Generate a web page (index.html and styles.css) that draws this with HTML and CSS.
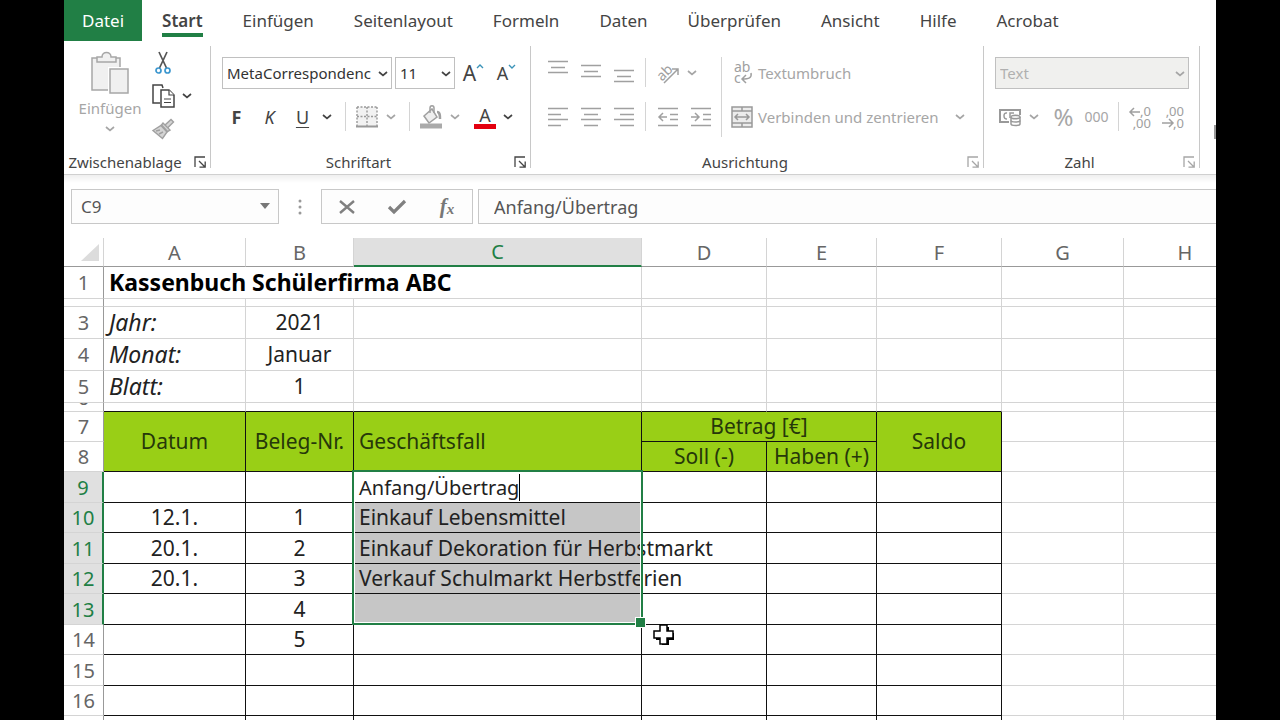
FILE: index.html
```html
<!DOCTYPE html>
<html lang="de">
<head>
  <meta charset="UTF-8">
  <meta name="viewport" content="width=device-width, initial-scale=1.0">
  <title>Kassenbuch Schülerfirma ABC</title>
  <link rel="stylesheet" href="styles.css">
</head>
<body>
  <svg class="defs" aria-hidden="true">
    <symbol id="chevron" viewBox="0 0 10 6"><path d="M1 1l4 3.4L9 1" fill="none" stroke="currentColor" stroke-width="1.7"/></symbol>
    <symbol id="launcher" viewBox="0 0 12 12"><path d="M1 11V1h10M5 5l6 6M11.2 5.500v5.700H5.500" fill="none" stroke="currentColor" stroke-width="1.3"/></symbol>
  </svg>

  <div class="app">
    <nav class="tabs">
      <button class="tab file">Datei</button>
      <button class="tab active"><span>Start</span></button>
      <button class="tab">Einfügen</button>
      <button class="tab">Seitenlayout</button>
      <button class="tab">Formeln</button>
      <button class="tab">Daten</button>
      <button class="tab">Überprüfen</button>
      <button class="tab">Ansicht</button>
      <button class="tab">Hilfe</button>
      <button class="tab">Acrobat</button>
    </nav>

    <div class="ribbon">
      <section class="group clipboard">
        <div class="tools">
          <button class="paste" disabled>
            <svg width="40" height="44" viewBox="0 0 40 44" fill="#f0f0f0" stroke="#a6a6a6" stroke-width="1.500">
              <path d="M2 7h28v32H2z"/>
              <path d="M7 11V6h5c0-6 9-6 9 0h5v5z"/>
              <path d="M20 18h18v24H20z" stroke="#fff" stroke-width="4"/>
              <path d="M20 18h18v24H20z"/>
            </svg>
            <span>Einfügen</span>
            <svg class="chev"><use href="#chevron"/></svg>
          </button>
          <div class="stack">
            <button class="icon" aria-label="Ausschneiden">
              <svg width="18" height="24" viewBox="0 0 18 24" fill="none" stroke="#555" stroke-width="1.700">
                <path d="M5 1l7.500 16M13 1L5.500 17"/>
                <circle cx="4.500" cy="19.500" r="2.500" stroke="#3c97cf"/>
                <circle cx="13.500" cy="19.500" r="2.500" stroke="#3c97cf"/>
              </svg>
            </button>
            <div class="row">
              <button class="icon" aria-label="Kopieren">
                <svg width="24" height="24" viewBox="0 0 24 24" fill="#fff" stroke="#444" stroke-width="1.500">
                  <path d="M9 19H2V1h9l1 3"/>
                  <path d="M10 6h8l5 5v12H10z"/>
                  <path d="M18 6v5h5M13 15h7M13 18.500h7" stroke-width="1.200"/>
                </svg>
              </button>
              <button class="drop" aria-label="Kopieroptionen"><svg class="chev"><use href="#chevron"/></svg></button>
            </div>
            <button class="icon" aria-label="Format übertragen" disabled>
              <svg width="24" height="22" viewBox="0 0 24 22" fill="#d4d4d4" stroke="#a0a0a0" stroke-width="1.400">
                <path d="M14 7l6-5.500 2.500 2.500-6 6"/>
                <path d="M12 5l7 7-2.500 1.500L10.500 7z"/>
                <path d="M10 7.500l6 6.500-4.500 6.500L2 12.500z"/>
                <path d="M5 13l4-1M8 16l4-2" fill="none"/>
              </svg>
            </button>
          </div>
        </div>
        <footer><span>Zwischenablage</span><button class="launch" aria-label="Zwischenablage öffnen"><svg><use href="#launcher"/></svg></button></footer>
      </section>

      <section class="group font">
        <div class="tools rows">
          <div class="row">
            <label class="pick family"><select aria-label="Schriftart"><option>MetaCorrespondence</option></select><svg class="chev"><use href="#chevron"/></svg></label>
            <label class="pick size"><select aria-label="Schriftgrad"><option>11</option></select><svg class="chev"><use href="#chevron"/></svg></label>
            <button class="icon letter big" aria-label="Schrift vergrößern">A<svg width="8" height="5" viewBox="0 0 8 5"><path d="M1 4l3-3 3 3" fill="none" stroke="#3b93b8" stroke-width="1.400"/></svg></button>
            <button class="icon letter" aria-label="Schrift verkleinern">A<svg width="8" height="5" viewBox="0 0 8 5"><path d="M1 1l3 3 3-3" fill="none" stroke="#3b93b8" stroke-width="1.400"/></svg></button>
          </div>
          <div class="row">
            <button class="icon bold">F</button>
            <button class="icon italic">K</button>
            <button class="icon underline">U</button>
            <button class="drop" aria-label="Unterstreichen"><svg class="chev"><use href="#chevron"/></svg></button>
            <i class="sep"></i>
            <button class="icon" aria-label="Rahmen" disabled>
              <svg width="22" height="22" viewBox="0 0 22 22" fill="none" stroke="#999" stroke-width="1.400">
                <path d="M1 1h20v19H1z" fill="#f2f2f2" stroke="none"/>
                <path d="M1 1h20M1 1v19M21 1v19M11 1v19M1 10.500h20" stroke-dasharray="2 1.500"/>
                <path d="M0 20.500h22" stroke-width="2"/>
              </svg>
            </button>
            <button class="drop" aria-label="Rahmenlinien" disabled><svg class="chev"><use href="#chevron"/></svg></button>
            <i class="sep"></i>
            <button class="icon" aria-label="Füllfarbe" disabled>
              <svg width="24" height="24" viewBox="0 0 24 24" fill="none" stroke="#a0a0a0" stroke-width="1.500">
                <path d="M5 11l8-7 5 8-8 6z" fill="#eee"/>
                <path d="M11 8V3c0-3 4-3 4 0v5"/>
                <path d="M18 7c3 0 3 3 3 7" stroke-width="2.500"/>
                <path d="M1 21h22" stroke="#aaa" stroke-width="5"/>
              </svg>
            </button>
            <button class="drop" aria-label="Füllfarben" disabled><svg class="chev"><use href="#chevron"/></svg></button>
            <button class="icon color">A</button>
            <button class="drop" aria-label="Schriftfarben"><svg class="chev"><use href="#chevron"/></svg></button>
          </div>
        </div>
        <footer><span>Schriftart</span><button class="launch" aria-label="Schriftart öffnen"><svg><use href="#launcher"/></svg></button></footer>
      </section>

      <section class="group align">
        <div class="tools">
          <div class="rows">
            <div class="row">
              <button class="icon" aria-label="Oben ausrichten" disabled><svg width="20" height="28" viewBox="0 0 20 28"><path d="M0 2.500h20M3 8.500h14M0 13.500h20" class="line"/></svg></button>
              <button class="icon" aria-label="Zentriert ausrichten" disabled><svg width="20" height="28" viewBox="0 0 20 28"><path d="M0 6.500h20M3 12.500h14M0 17.500h20" class="line"/></svg></button>
              <button class="icon" aria-label="Unten ausrichten" disabled><svg width="20" height="28" viewBox="0 0 20 28"><path d="M0 11.500h20M3 17.500h14M0 22.500h20" class="line"/></svg></button>
              <i class="sep"></i>
              <button class="icon" aria-label="Ausrichtung" disabled>
                <svg width="24" height="24" viewBox="0 0 24 24"><text x="1" y="17" transform="rotate(-45 8 13)" class="ab">ab</text><path d="M8 22L22 8M16 8h6v6" class="line"/></svg>
              </button>
              <button class="drop" aria-label="Ausrichtungswinkel" disabled><svg class="chev"><use href="#chevron"/></svg></button>
            </div>
            <div class="row">
              <button class="icon" aria-label="Linksbündig" disabled><svg width="20" height="20" viewBox="0 0 20 20"><path d="M0 1.500h20M0 7.500h13M0 12.500h20M0 18.500h13" class="line"/></svg></button>
              <button class="icon" aria-label="Zentriert" disabled><svg width="20" height="20" viewBox="0 0 20 20"><path d="M0 1.500h20M3 7.500h14M0 12.500h20M3 18.500h14" class="line"/></svg></button>
              <button class="icon" aria-label="Rechtsbündig" disabled><svg width="20" height="20" viewBox="0 0 20 20"><path d="M0 1.500h20M6 7.500h14M0 12.500h20M6 18.500h14" class="line"/></svg></button>
              <i class="sep"></i>
              <button class="icon" aria-label="Einzug verkleinern" disabled><svg width="20" height="20" viewBox="0 0 20 20"><path d="M0 1.500h20M12 7.500h8M12 12.500h8M0 18.500h20M9 10H1M5 6l-4 4 4 4" class="line"/></svg></button>
              <button class="icon" aria-label="Einzug vergrößern" disabled><svg width="20" height="20" viewBox="0 0 20 20"><path d="M0 1.500h20M12 7.500h8M12 12.500h8M0 18.500h20M0 10h8M4 6l4 4-4 4" class="line"/></svg></button>
            </div>
          </div>
          <i class="sep tall"></i>
          <div class="rows">
            <div class="row">
              <button class="wide" disabled>
                <svg width="22" height="24" viewBox="0 0 22 24"><text x="3" y="11" class="ab">ab</text><text x="3" y="22" class="ab">c</text><path d="M20 12c1 5-2 6-9 6M15 14l-4 4 4 4" class="line"/></svg>
                Textumbruch
              </button>
            </div>
            <div class="row">
              <button class="wide" disabled>
                <svg width="22" height="22" viewBox="0 0 22 22" fill="#ececec" stroke="#999" stroke-width="1.500"><path d="M1 1h20v20H1z"/><path d="M1 5h20M1 17h20M11 1v4M11 17v4M4 11h14M7 8l-3 3 3 3M15 8l3 3-3 3" fill="none"/></svg>
                Verbinden und zentrieren
              </button>
              <button class="drop" aria-label="Verbindungsoptionen" disabled><svg class="chev"><use href="#chevron"/></svg></button>
            </div>
          </div>
        </div>
        <footer><span>Ausrichtung</span><button class="launch" aria-label="Ausrichtung öffnen" disabled><svg><use href="#launcher"/></svg></button></footer>
      </section>

      <section class="group number">
        <div class="tools rows">
          <div class="row">
            <label class="pick format"><select aria-label="Zahlenformat" disabled><option>Text</option></select><svg class="chev"><use href="#chevron"/></svg></label>
          </div>
          <div class="row">
            <button class="icon" aria-label="Buchhaltungsformat" disabled>
              <svg width="24" height="20" viewBox="0 0 24 20" fill="none" stroke="#999" stroke-width="1.500">
                <path d="M11 15H2V3h20v5" stroke-width="2"/>
                <path d="M9 6c-4-1-4 6 0 6M12 11V6h4"/>
                <path d="M13 10v7c0 2 9 2 9 0v-7" fill="#fff"/>
                <ellipse cx="17.500" cy="10" rx="4.500" ry="1.800" fill="#eee"/>
                <path d="M13 13.500c0 2 9 2 9 0"/>
              </svg>
            </button>
            <button class="drop" aria-label="Währungen" disabled><svg class="chev"><use href="#chevron"/></svg></button>
            <button class="icon percent" disabled>%</button>
            <button class="icon thousands" disabled>000</button>
            <i class="sep"></i>
            <button class="icon" aria-label="Dezimalstelle hinzufügen" disabled>
              <svg width="24" height="24" viewBox="0 0 24 24"><text x="22" y="11" class="dec">,0</text><text x="22" y="23" class="dec">,00</text><path d="M11 7H1M5 3L1 7l4 4" class="line"/></svg>
            </button>
            <button class="icon" aria-label="Dezimalstelle löschen" disabled>
              <svg width="24" height="24" viewBox="0 0 24 24"><text x="22" y="11" class="dec">,00</text><text x="22" y="23" class="dec">,0</text><path d="M0 18h11M7 14l4 4-4 4" class="line"/></svg>
            </button>
          </div>
        </div>
        <footer><span>Zahl</span><button class="launch" aria-label="Zahl öffnen" disabled><svg><use href="#launcher"/></svg></button></footer>
      </section>

      <section class="more">
        <svg width="20" height="12" viewBox="0 0 20 12"><path d="M1 0h19v12H1z" fill="#eee" stroke="#999" stroke-width="2"/></svg>
      </section>
    </div>

    <div class="formula-bar">
      <label class="name-box"><input type="text" value="C9" aria-label="Namenfeld"><svg width="10" height="6" viewBox="0 0 10 6"><path d="M0 0h10L5 6z" fill="#777"/></svg></label>
      <svg class="dots" width="4" height="16" viewBox="0 0 4 16" fill="#999"><circle cx="2" cy="2" r="1.500"/><circle cx="2" cy="8" r="1.500"/><circle cx="2" cy="14" r="1.500"/></svg>
      <div class="entry">
        <button aria-label="Abbrechen"><svg width="18" height="16" viewBox="0 0 18 16"><path d="M2 2l14 12M16 2L2 14" fill="none" stroke="#808080" stroke-width="2.400"/></svg></button>
        <button aria-label="Eingeben"><svg width="20" height="16" viewBox="0 0 20 16"><path d="M2 8l5 5L18 2" fill="none" stroke="#808080" stroke-width="3.200"/></svg></button>
        <button class="fx" aria-label="Funktion einfügen">f<small>x</small></button>
      </div>
      <input type="text" class="formula" value="Anfang/Übertrag" aria-label="Bearbeitungsleiste">
    </div>

    <div class="sheet">
      <table>
        <colgroup><col class="c0"><col class="ca"><col class="cb"><col class="cc"><col class="cd"><col class="ce"><col class="cf"><col class="cg"><col class="ch"></colgroup>
        <thead>
          <tr><th class="corner"><svg width="18" height="17" viewBox="0 0 18 17"><path d="M18 0v17H0z" fill="#dcdcdc"/></svg></th><th>A</th><th>B</th><th class="on">C</th><th>D</th><th>E</th><th>F</th><th>G</th><th>H</th></tr>
        </thead>
        <tbody class="intro">
          <tr><th>1</th><td class="title" colspan="3">Kassenbuch Schülerfirma ABC</td><td></td><td></td><td></td><td></td><td></td></tr>
          <tr class="thin"><th></th><td></td><td></td><td></td><td></td><td></td><td></td><td></td><td></td></tr>
          <tr><th>3</th><td class="key">Jahr:</td><td>2021</td><td></td><td></td><td></td><td></td><td></td><td></td></tr>
          <tr><th>4</th><td class="key">Monat:</td><td>Januar</td><td></td><td></td><td></td><td></td><td></td><td></td></tr>
          <tr><th>5</th><td class="key">Blatt:</td><td>1</td><td></td><td></td><td></td><td></td><td></td><td></td></tr>
          <tr class="thin last"><th><div>6</div></th><td></td><td></td><td></td><td></td><td></td><td></td><td></td><td></td></tr>
        </tbody>
        <tbody class="book">
          <tr class="head"><th>7</th><td rowspan="2">Datum</td><td rowspan="2">Beleg-Nr.</td><td rowspan="2" class="text">Geschäftsfall</td><td colspan="2">Betrag [€]</td><td rowspan="2">Saldo</td><td class="out"></td><td class="out"></td></tr>
          <tr class="head"><th>8</th><td>Soll (-)</td><td>Haben (+)</td><td class="out"></td><td class="out"></td></tr>
          <tr><th class="on">9</th><td></td><td></td><td class="text active"><span class="editor" contenteditable="true" role="textbox">Anfang/Übertrag</span><div class="selection"></div></td><td></td><td></td><td></td><td class="out"></td><td class="out"></td></tr>
          <tr><th class="on">10</th><td>12.1.</td><td>1</td><td class="text sel">Einkauf Lebensmittel</td><td></td><td></td><td></td><td class="out"></td><td class="out"></td></tr>
          <tr><th class="on">11</th><td>20.1.</td><td>2</td><td class="text sel">Einkauf Dekoration für Herbstmarkt</td><td></td><td></td><td></td><td class="out"></td><td class="out"></td></tr>
          <tr><th class="on">12</th><td>20.1.</td><td>3</td><td class="text sel">Verkauf Schulmarkt Herbstferien</td><td></td><td></td><td></td><td class="out"></td><td class="out"></td></tr>
          <tr><th class="on">13</th><td></td><td>4</td><td class="text sel"></td><td></td><td></td><td></td><td class="out"></td><td class="out"></td></tr>
          <tr><th>14</th><td></td><td>5</td><td></td><td class="pointer"><svg width="22" height="22" viewBox="0 0 22 22"><path d="M9 3h7v6h5v7h-5v5H9v-5H3V9h6z"/><path d="M7 1h7v6h6v7h-6v6H7v-6H1V7h6z" fill="#fff" stroke="#000" stroke-width="1.500"/></svg></td><td></td><td></td><td class="out"></td><td class="out"></td></tr>
          <tr><th>15</th><td></td><td></td><td></td><td></td><td></td><td></td><td class="out"></td><td class="out"></td></tr>
          <tr><th>16</th><td></td><td></td><td></td><td></td><td></td><td></td><td class="out"></td><td class="out"></td></tr>
          <tr><th></th><td></td><td></td><td></td><td></td><td></td><td></td><td class="out"></td><td class="out"></td></tr>
        </tbody>
      </table>
    </div>
  </div>
</body>
</html>
```
FILE: styles.css
```css
* { box-sizing: border-box; }
html, body { height: 100%; }
body { margin: 0; padding: 0 5%; background: #000; color: #444; font-family: "Noto Sans", "Open Sans", sans-serif; overflow: hidden; }
button, input, select { font: inherit; color: inherit; margin: 0; padding: 0; border: none; background: none; }
button { display: flex; align-items: center; justify-content: center; }
button:disabled { color: #a6a6a6; }
svg { overflow: visible; }
.defs { position: absolute; width: 0; height: 0; }
.app { display: flex; flex-direction: column; height: 100%; background: #fff; overflow: hidden; }

/* Tabs */
.tabs { display: flex; height: 41px; font-size: 17px; flex: none; }
.tab { padding: 0 20px; white-space: nowrap; }
.tab.file { background: #217f45; color: #fff; padding: 0 18px; }
.tab.active { font-weight: 600; }
.tab.active span { line-height: 24px; margin-top: 4px; border-bottom: 4px solid #217f45; }

/* Ribbon */
.ribbon { display: flex; flex: none; height: 134px; padding: 5px 0 6px; border-bottom: 1px solid #d0d0d0; font-size: 15px; }
.group { display: flex; flex-direction: column; flex: none; border-right: 1px solid #c8c8c8; }
.clipboard { width: 147px; }
.font { width: 320px; }
.align { width: 453px; }
.number { width: 216px; }
.more { flex: 1; min-width: 0; padding: 76px 0 0 14px; overflow: hidden; }
.tools { display: flex; flex: 1; }
.rows { display: flex; flex-direction: column; gap: 13px; }
.font .tools, .number .tools { padding: 11px 0 0 9px; }
.align .tools { padding: 11px 0 0 10px; gap: 4px; }
.row { display: flex; align-items: center; height: 31px; }
.group footer { display: flex; align-items: center; height: 12px; line-height: 12px; padding: 0 4px; color: #444; }
.group footer span { flex: 1; padding-right: 12px; text-align: center; }
.launch svg { width: 12px; height: 12px; }
.icon { width: 33px; height: 31px; flex: none; }
.drop { width: 16px; height: 31px; flex: none; }
.chev { width: 10px; height: 6px; flex: none; }
.sep { width: 1px; height: 29px; margin: 0 5px; background: #d4d4d4; flex: none; }
.sep.tall { height: 80px; margin: 0; }
.font .sep { margin: 0 4px 0 10px; }
.line { fill: none; stroke: #a0a0a0; stroke-width: 1.5px; }
.ab { fill: #a0a0a0; font-size: 14px; }
.dec { fill: #a0a0a0; font-size: 13px; text-anchor: end; }

.clipboard .row, .stack .icon { height: 33px; }
.paste { flex-direction: column; justify-content: flex-start; width: 82px; padding: 5px 0 0 10px; gap: 3px; }
.paste .chev { margin-top: 5px; }
.pick { position: relative; display: flex; height: 32px; }
.pick select { width: 100%; padding: 0 20px 0 4px; appearance: none; border: 1px solid #c0c0c0; color: #333; }
.pick .chev { position: absolute; right: 4px; top: 14px; }
.family { width: 170px; margin: 0 3px 0 2px; }
.size { width: 60px; }
.format { width: 194px; margin-left: 2px; }
.format select { background: #f0f0ee; color: #b0b0b0; opacity: 1; }
.format .chev { color: #a6a6a6; }
.letter { font-size: 18px; padding-left: 4px; }
.letter.big { font-size: 21px; }
.letter svg { margin-bottom: 12px; }
.bold { font-weight: bold; font-size: 18px; }
.italic { font-style: italic; font-size: 18px; }
.underline { text-decoration: underline; text-underline-offset: 3px; font-size: 18px; }
.color { align-items: flex-start; width: 22px; height: 24px; margin: 0 4px 0 11px; border-bottom: 5px solid #e3000f; font-size: 18px; line-height: 20px; }
.percent { margin-left: 5px; font-size: 24px; }
.thousands { font-size: 14px; }
.wide { gap: 5px; height: 31px; margin-left: 5px; white-space: nowrap; }
.wide + .drop { margin-left: 13px; }

/* Formula bar */
.formula-bar { display: flex; flex: none; height: 63px; padding: 14px 0 14px 7px; background: linear-gradient(#efefef, #fff 8px); font-size: 18px; color: #555; }
.name-box { position: relative; display: flex; width: 208px; }
.name-box input { width: 100%; padding: 0 9px; border: 1px solid #c8c8c8; background: #fdfdfd; font-size: 17px; }
.name-box svg { position: absolute; right: 9px; top: 14px; }
.dots { align-self: center; margin: 0 19px; }
.entry { display: flex; width: 152px; border: 1px solid #c8c8c8; background: #fdfdfd; }
.entry button { flex: 1; }
.fx { font-family: "Liberation Serif", serif; font-style: italic; font-weight: bold; font-size: 21px; color: #777; }
.fx small { font-size: 15px; margin-top: 5px; }
.formula { flex: 1; min-width: 0; margin-left: 5px; padding: 0 15px; border: 1px solid #c8c8c8; border-right: none; background: #fdfdfd; }

/* Sheet */
.sheet { flex: 1; min-height: 0; overflow: hidden; }
table { width: 1183px; table-layout: fixed; border-collapse: separate; border-spacing: 0; font-size: 21px; line-height: 27px; }
.c0 { width: 40px; }
.ca { width: 142px; }
.cb { width: 108px; }
.cc { width: 288px; }
.cd { width: 125px; }
.ce { width: 110px; }
.cf { width: 125px; }
.cg { width: 122px; }
.ch { width: 123px; }
th, td { padding: 0; border: 0 solid #d4d4d4; border-width: 0 1px 1px 0; white-space: nowrap; text-align: center; color: #222; }
th { font-weight: normal; font-size: 20px; color: #666; }
thead th { height: 29px; border-bottom-color: #999; }
thead th.on { background: #e0e0e0; color: #217f45; border-bottom: 2px solid #217f45; }
.corner svg { display: block; margin-left: 17px; }
tbody th { border-right-color: #999; }
tbody th.on { background: #e0e0e0; color: #217f45; border-right: 2px solid #217f45; }

.intro tr { height: 32px; }
.intro .thin { height: 8px; line-height: 0; }
.intro .last { height: 9px; }
.last div { display: flex; align-items: flex-end; justify-content: center; height: 8px; line-height: 27px; overflow: hidden; }
.last td:nth-child(-n+7) { border-bottom-color: #111; }
.title { padding-left: 5px; text-align: left; font-size: 23px; font-weight: bold; color: #000; }
.key { padding-left: 5px; text-align: left; font-size: 23px; font-style: italic; }

.book tr { height: 30px; }
.book tr:nth-child(2n+3) { height: 31px; }
.book td { border-color: #111; }
.book .out { border-color: #d4d4d4; background: none; }
.head td { background: #99cf16; color: #26380a; }
.text { padding-left: 5px; text-align: left; }
.sel { background: #c6c6c6; }
.active { position: relative; }
.editor { display: inline-block; border-right: 1px solid #000; font-size: 20px; outline: none; }
/* green frame around C9:C13 with its fill handle */
.selection { position: absolute; left: -2px; right: -2px; top: -2px; height: 155px; border: 2px solid #217f45; box-shadow: inset 0 0 0 1px #fff; pointer-events: none; }
.selection::after { content: ""; position: absolute; right: -5px; bottom: -5px; width: 9px; height: 9px; background: #217f45; border: 1px solid #fff; }
.pointer { position: relative; }
.pointer svg { position: absolute; left: 11px; top: -1px; }
```
